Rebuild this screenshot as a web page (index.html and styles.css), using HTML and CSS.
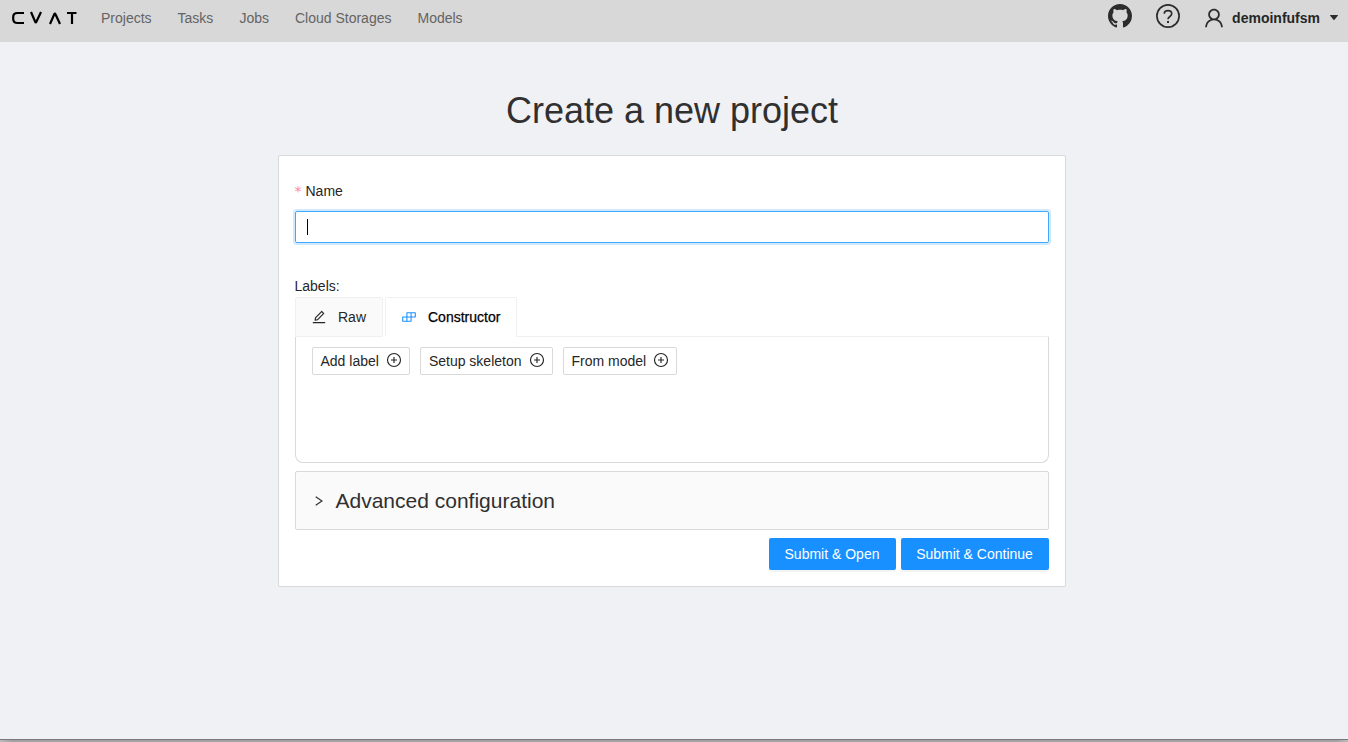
FILE: index.html
```html
<!DOCTYPE html>
<html lang="en">
<head>
<meta charset="utf-8">
<title>Create a new project</title>
<link rel="stylesheet" href="styles.css">
</head>
<body>
<header class="header">
  <svg class="logo" width="66" height="14" viewBox="0 0 66 14" role="img" aria-label="CVAT">
    <path d="M13 2H6.500Q2.200 2 2.200 6v2Q2.200 12 6.500 12H13M20 1l4.200 9.800q.6 1.400 1.200 0L30 1M39 13l4.300-9.800q.6-1.400 1.200 0L49 13M56 2h9.500M61 2v11"/>
  </svg>
  <nav class="nav">
    <a>Projects</a><a>Tasks</a><a>Jobs</a><a>Cloud Storages</a><a>Models</a>
  </nav>
  <div class="actions">
    <svg class="github" viewBox="0 0 16 16"><path d="M8 0C3.580 0 0 3.580 0 8c0 3.540 2.290 6.530 5.470 7.590.4.070.550-.170.550-.380 0-.190-.010-.820-.010-1.490-2.010.370-2.530-.490-2.690-.940-.090-.230-.480-.940-.820-1.130-.280-.150-.680-.520-.010-.530.630-.010 1.080.580 1.230.820.720 1.210 1.870.870 2.330.660.070-.520.280-.870.510-1.070-1.780-.2-3.640-.890-3.640-3.950 0-.870.310-1.590.820-2.150-.080-.2-.360-1.020.080-2.120 0 0 .670-.210 2.200.820.640-.180 1.320-.270 2-.270s1.360.090 2 .270c1.530-1.040 2.200-.820 2.200-.820.440 1.100.160 1.920.080 2.120.510.560.820 1.270.820 2.150 0 3.070-1.870 3.750-3.650 3.950.290.250.540.730.540 1.480 0 1.070-.010 1.930-.010 2.200 0 .210.150.460.550.380A8.010 8.010 0 0 0 16 8c0-4.420-3.580-8-8-8z"/></svg>
    <svg class="help" viewBox="0 0 24 24"><circle cx="12" cy="12" r="11.100"/><path d="M8.300 9.700C8.300 7.900 9.900 6.600 12 6.600s3.700 1.300 3.700 3.100c0 2.800-3.700 2.700-3.700 5.500"/><path class="dot" d="M11 17h2v2h-2z"/></svg>
    <div class="user">
      <svg class="user-icon" viewBox="0 0 1024 1024"><path d="M858.5 763.6a374 374 0 00-80.6-119.5 375.63 375.63 0 00-119.5-80.6c-.4-.2-.8-.3-1.2-.5C719.5 518 760 444.700 760 362c0-137-111-248-248-248S264 225 264 362c0 82.700 40.500 156 102.800 201.100-.4.2-.8.3-1.2.5-44.800 18.900-85 46-119.500 80.600a375.63 375.63 0 00-80.600 119.500A371.700 371.700 0 00136 901.800a8 8 0 008 8.200h60c4.400 0 7.900-3.500 8-7.800 2-77.200 33-149.500 87.800-204.300 56.700-56.700 132-87.900 212.200-87.900s155.500 31.200 212.200 87.900C779 752.700 810 825 812 902.200c.1 4.400 3.600 7.800 8 7.800h60a8 8 0 008-8.200c-1-47.800-10.900-94.300-29.500-138.200zM512 534c-45.900 0-89.100-17.900-121.600-50.400S340 407.900 340 362c0-45.900 17.900-89.100 50.400-121.600S466.100 190 512 190s89.100 17.900 121.600 50.400S684 316.100 684 362c0 45.900-17.900 89.100-50.400 121.600S557.900 534 512 534z"/></svg>
      <span class="user-name">demoinfufsm</span>
      <svg class="caret" viewBox="0 0 8 5"><path d="M.4 0h7.200q.6.200.2.700L4.500 4.700q-.5.500-1 0L.2.700Q-.2.200.4 0z"/></svg>
    </div>
  </div>
</header>
<main class="page">
  <h1 class="title">Create a new project</h1>
  <section class="card">
    <label class="field-label"><span class="required">*</span>Name</label>
    <div class="input"><span class="cursor"></span></div>
    <div class="labels-title">Labels:</div>
    <div class="tabs">
      <div class="tab">
        <svg class="tab-icon" viewBox="0 0 1024 1024"><path d="M257.7 752c2 0 4-.2 6-.5L431.9 722c2-.4 3.9-1.3 5.3-2.8l423.9-423.9a9.96 9.96 0 000-14.1L694.9 114.9c-1.9-1.9-4.4-2.9-7.1-2.9s-5.2 1-7.1 2.9L256.8 538.800c-1.500 1.500-2.400 3.300-2.800 5.300l-29.500 168.200a33.500 33.500 0 009.400 29.800c6.600 6.400 14.900 9.900 23.800 9.900zm67.400-174.400L687.800 215l73.300 73.300-362.700 362.600-88.900 15.700 15.600-89zM880 836H144c-17.700 0-32 14.300-32 32v36c0 4.400 3.600 8 8 8h784c4.400 0 8-3.600 8-8v-36c0-17.700-14.300-32-32-32z"/></svg>
        <span>Raw</span>
      </div>
      <div class="tab tab-active">
        <svg class="tab-icon" viewBox="0 0 1024 1024"><path d="M916 210H376c-17.700 0-32 14.300-32 32v236H108c-17.700 0-32 14.300-32 32v272c0 17.700 14.300 32 32 32h540c17.700 0 32-14.300 32-32V546h236c17.700 0 32-14.300 32-32V242c0-17.700-14.300-32-32-32zm-504 68h200v200H412V278zm-68 468H144V546h200v200zm268 0H412V546h200v200zm268-268H680V278h200v200z"/></svg>
        <span>Constructor</span>
      </div>
      <div class="tabs-rest"></div>
    </div>
    <div class="panel">
      <button class="small-btn">Add label<svg class="plus" viewBox="0 0 16 16"><circle cx="8" cy="8" r="6.500"/><path d="M8 5v6M5 8h6"/></svg></button>
      <button class="small-btn">Setup skeleton<svg class="plus" viewBox="0 0 16 16"><circle cx="8" cy="8" r="6.500"/><path d="M8 5v6M5 8h6"/></svg></button>
      <button class="small-btn">From model<svg class="plus" viewBox="0 0 16 16"><circle cx="8" cy="8" r="6.500"/><path d="M8 5v6M5 8h6"/></svg></button>
    </div>
    <div class="advanced">
      <svg class="chevron" viewBox="0 0 8 10"><path d="M.7.700L7 5 .7 9.300"/></svg>
      <span>Advanced configuration</span>
    </div>
    <div class="submit-row">
      <button class="primary">Submit &amp; Open</button>
      <button class="primary primary-wide">Submit &amp; Continue</button>
    </div>
  </section>
</main>
<footer class="bottom-edge"></footer>
</body>
</html>
```
FILE: styles.css
```css
* { box-sizing: border-box; }
body {
  margin: 0;
  height: 742px;
  display: flex;
  flex-direction: column;
  overflow: hidden;
  background: #f0f1f5;
  color: #262626;
  font: 14px/22px "Liberation Sans", Arial, sans-serif;
}
svg { display: block; flex: none; fill: currentColor; }
.header {
  height: 42px;
  flex: none;
  display: flex;
  align-items: flex-start;
  padding: 0 10px 0 11px;
  background: #d8d8d8;
}
.logo { margin-top: 11px; fill: none; stroke: #000; stroke-width: 2.2; }
.nav { display: flex; gap: 26px; margin: 7px 0 0 24px; color: #646464; }
.actions { display: flex; margin-left: auto; color: #2c2c2c; }
.github { width: 24px; height: 24px; margin-top: 4px; }
.help {
  width: 24px;
  height: 24px;
  margin: 4px 0 0 24px;
  fill: none;
  stroke: currentColor;
  stroke-width: 1.7;
}
.dot { fill: currentColor; stroke: none; }
.user { display: flex; align-items: flex-start; margin-left: 22px; }
.user-icon { width: 24px; height: 24px; margin-top: 6px; }
.user-name { margin: 7px 10px 0 6px; font-weight: 700; color: #262626; }
.caret { width: 8px; height: 5px; margin-top: 15px; }
.page { flex: 1; display: flex; flex-direction: column; align-items: center; padding-right: 4px; }
.title { margin: 46px 0 21px; font-size: 36px; line-height: 46px; font-weight: 400; color: #303030; }
.card {
  width: 788px;
  height: 432px;
  margin-left: -1px;
  padding: 24px 16px 16px;
  border: 1px solid #d9d9d9;
  border-radius: 2px;
  background: #fff;
}
.field-label { display: flex; height: 22px; }
.required { width: 11px; color: #ff8a8c; font-family: "DejaVu Sans", sans-serif; }
.input {
  height: 32px;
  margin-top: 9px;
  padding: 7px 11px;
  border: 1px solid #40a9ff;
  border-radius: 2px;
  box-shadow: 0 0 0 2px rgba(24, 144, 255, .2);
}
.cursor { display: block; width: 1px; height: 16px; background: #000; }
.labels-title { margin-top: 32px; }
.tabs { display: flex; height: 40px; }
.tab {
  display: flex;
  align-items: center;
  gap: 11px;
  width: 88px;
  padding-left: 15.5px;
  border: 1px solid #f0f0f0;
  border-radius: 2px 2px 0 0;
  background: #fafafa;
}
.tab-icon { width: 16px; height: 16px; }
.tab-active {
  width: 132px;
  margin-left: 2px;
  border-bottom-color: #fff;
  background: #fff;
  color: #000;
  -webkit-text-stroke: .25px currentColor;
}
.tab-active .tab-icon { color: #1890ff; }
.tabs-rest { flex: 1; border-bottom: 1px solid #f0f0f0; }
.panel {
  display: flex;
  align-items: flex-start;
  gap: 10px;
  height: 126px;
  padding: 10px 16px;
  border: 1px solid #d9d9d9;
  border-top: 0;
  border-radius: 0 0 8px 8px;
}
.small-btn {
  display: flex;
  align-items: center;
  gap: 7px;
  height: 28px;
  padding: 0 7px 0 8px;
  border: 1px solid #d9d9d9;
  border-radius: 2px;
  background: #fff;
  color: #262626;
  font: inherit;
}
.plus { width: 16px; height: 16px; margin-top: -2px; fill: none; stroke: currentColor; stroke-width: 1.150; }
.advanced {
  display: flex;
  align-items: center;
  height: 59px;
  margin-top: 8px;
  padding-left: 19px;
  border: 1px solid #d9d9d9;
  border-radius: 2px;
  background: #fafafa;
  color: #303030;
  font-size: 21px;
}
.chevron { width: 8px; height: 10px; margin-right: 13px; fill: none; stroke: #303030; stroke-width: 1.200; }
.submit-row { display: flex; justify-content: flex-end; gap: 5px; margin-top: 8px; }
.primary {
  width: 127px;
  height: 32px;
  padding: 0;
  border: 0;
  border-radius: 2px;
  background: #1890ff;
  box-shadow: 0 2px 0 rgba(0, 0, 0, .045);
  color: #fff;
  font: inherit;
}
.primary-wide { width: 148px; }
.bottom-edge {
  height: 3px;
  flex: none;
  border-top: 1px solid #77787c;
  background: linear-gradient(90deg, #bbb 0, #a2a2a2 12px, #a2a2a2 calc(100% - 12px), #bbb 100%);
}
```
